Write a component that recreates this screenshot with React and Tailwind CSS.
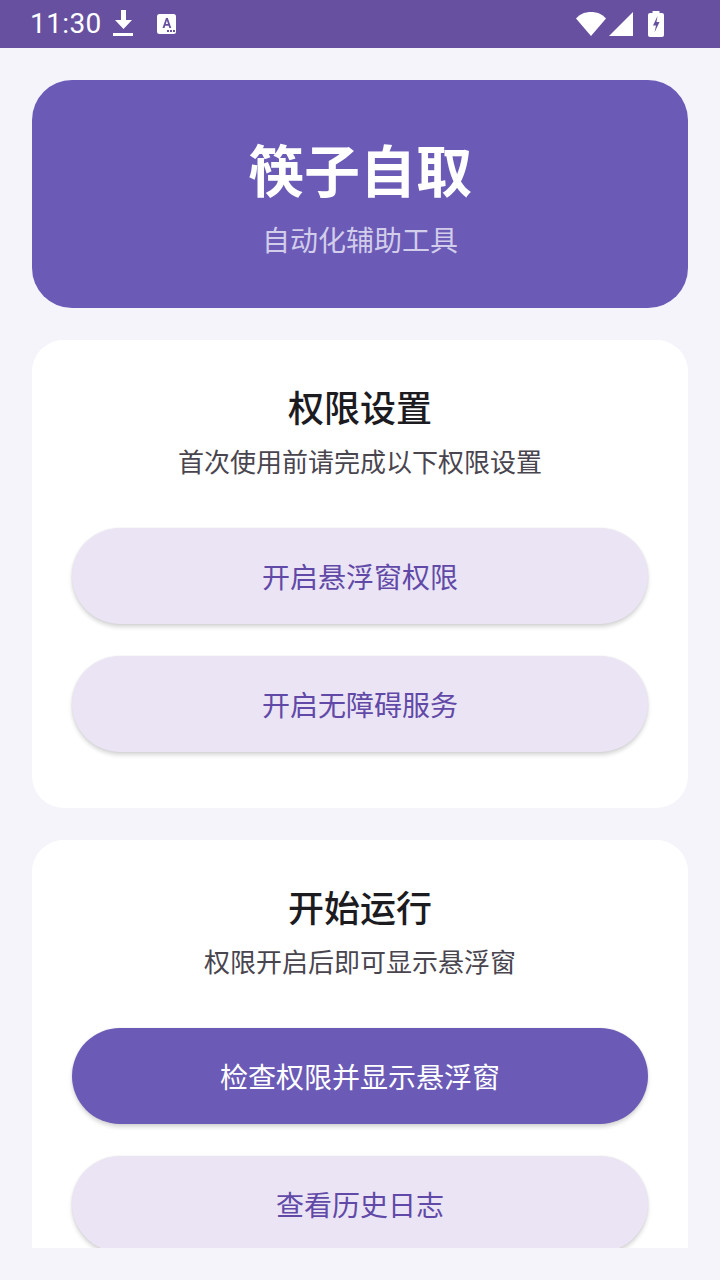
function Btn({ primary, children }) {
  return (
    <div className={`h-24 shrink-0 rounded-[48px] flex items-center justify-center text-[28px] leading-none shadow-[0_3px_4px_rgba(0,0,0,0.16),0_0_2px_rgba(0,0,0,0.08)] ${primary ? "bg-[#6B5BB7] text-white" : "bg-[#EBE4F4] text-[#6149A8]"}`}>
      <span>{children}</span>
    </div>
  );
}
function Section({ title, sub, children }) {
  return (
    <div className="bg-white rounded-t-[32px] px-10 pt-10 flex flex-col items-stretch">
      <div className="text-center text-[36px] leading-[56px] font-medium text-[#1C1B1F] -mt-[2px]">{title}</div>
      <div className="text-center text-[26px] leading-[40px] text-[#49454F] mt-[7px]">{sub}</div>
      <div className="flex flex-col gap-8 mt-[47px]">{children}</div>
    </div>
  );
}
export default function App() {
  return (
    <div className="w-[720px] h-[1280px] overflow-hidden bg-[#F5F4FB] flex flex-col" style={{ fontFamily: '"Noto Sans CJK SC", "Noto Sans", sans-serif' }}>
      <div className="h-12 shrink-0 bg-[#67509F] flex items-center text-white relative">
        <span className="ml-[30px] text-[28px] leading-none tracking-[0.4px]" style={{ fontFamily: "Roboto, sans-serif" }}>11:30</span>
        <svg className="ml-[10px]" width="24" height="30" viewBox="0 0 24 30" fill="#fff">
          <path d="M9 1h5v10h6l-8.500 9L3 11h6z" />
          <rect x="1" y="24" width="20" height="3" />
        </svg>
        <svg className="ml-[19px]" width="24" height="24" viewBox="0 0 24 24">
          <rect x="2" y="2" width="19" height="20" rx="2.500" fill="#fff" />
          <path d="M7.500 16 11 6h1.800l3.500 10h-2l-.7-2.200h-3.400L9.500 16zM10.800 12h2.200l-1.100-3.400z" fill="#67509F" />
          <rect x="12" y="18" width="2" height="2" fill="#67509F" />
          <rect x="15" y="18" width="2" height="2" fill="#67509F" />
          <rect x="18" y="18" width="2" height="2" fill="#67509F" />
        </svg>
        <div className="ml-auto flex items-center mr-[55px]">
          <svg width="30" height="26" viewBox="0 0 30 26" fill="#fff"><path d="M0 7.500C4 3 9 1 15 1s11 2 15 6.500L15 25z" /></svg>
          <svg className="ml-[2px]" width="26" height="26" viewBox="0 0 26 26" fill="#fff"><path d="M25 1v24H1z" /></svg>
          <svg className="ml-[13px]" width="18" height="26" viewBox="0 0 18 26">
            <path d="M5.500 0h7v2H15a2 2 0 0 1 2 2v20a2 2 0 0 1-2 2H3a2 2 0 0 1-2-2V4a2 2 0 0 1 2-2h2.500z" fill="#fff" />
            <path d="M10.500 5 6 14.500h3L7.500 21.500 12.500 11H9.500z" fill="#67509F" />
          </svg>
        </div>
      </div>
      <div className="flex-1 min-h-0 flex flex-col mt-8 mx-8 mb-8 overflow-hidden">
        <div className="h-[228px] shrink-0 rounded-[40px] bg-[#6B5BB7] flex flex-col items-center">
          <div className="text-[56px] leading-[72px] font-bold text-white mt-[52px]">筷子自取</div>
          <div className="text-[28px] leading-[40px] text-[#D2CDEA] mt-[15px]">自动化辅助工具</div>
        </div>
        <div className="mt-8 h-[468px] shrink-0 rounded-[32px] bg-white">
          <Section title="权限设置" sub="首次使用前请完成以下权限设置">
            <Btn>开启悬浮窗权限</Btn>
            <Btn>开启无障碍服务</Btn>
          </Section>
        </div>
        <div className="mt-8 flex-1 min-h-0 overflow-hidden rounded-t-[32px] bg-white">
          <Section title="开始运行" sub="权限开启后即可显示悬浮窗">
            <Btn primary>检查权限并显示悬浮窗</Btn>
            <Btn>查看历史日志</Btn>
          </Section>
        </div>
      </div>
    </div>
  );
}
